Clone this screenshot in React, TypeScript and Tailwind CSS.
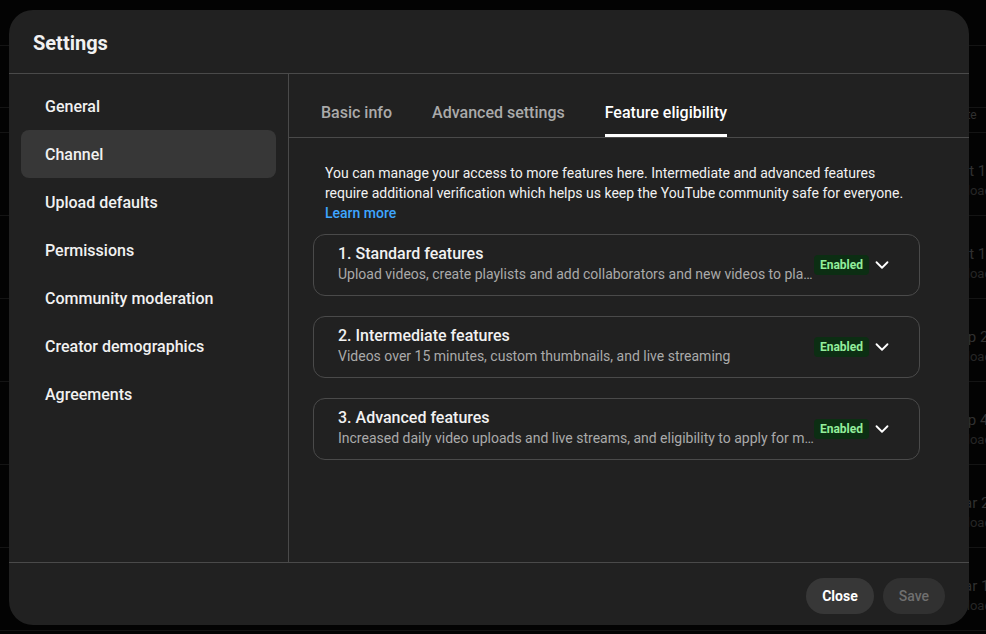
import { ChevronDown } from 'lucide-react';

const navItems = [
  'General',
  'Channel',
  'Upload defaults',
  'Permissions',
  'Community moderation',
  'Creator demographics',
  'Agreements',
];

const tabs = ['Basic info', 'Advanced settings', 'Feature eligibility'];

const features = [
  {
    title: '1. Standard features',
    desc: 'Upload videos, create playlists and add collaborators and new videos to playlists',
  },
  {
    title: '2. Intermediate features',
    desc: 'Videos over 15 minutes, custom thumbnails, and live streaming',
  },
  {
    title: '3. Advanced features',
    desc: 'Increased daily video uploads and live streams, and eligibility to apply for monetization',
  },
];

const bgRows = ['Oct 16, 2023', 'Oct 16, 2023', 'Sep 27, 2023', 'Sep 4, 2023', 'Mar 23, 2023', 'Mar 15, 2023'];

function Backdrop() {
  return (
    <div className="flex h-full flex-col bg-[#030303] text-[14px] text-[#303030]">
      <div className="h-[46px] border-b border-[#141414]" />
      <div className="h-[62px] border-b border-[#141414]" />
      <div className="flex h-[25px] items-center border-b border-[#141414] pt-[8px]">
        <div className="w-[952px] shrink-0" />
        <span className="text-[12px]">Date ⌄</span>
      </div>
      {bgRows.map((d, i) => (
        <div key={i} className="flex h-[83px] shrink-0 border-b border-[#141414]">
          <div className="w-[951px] shrink-0" />
          <div className="flex flex-col whitespace-nowrap pt-[28px] leading-5">
            <span className="text-[15px]">{d}</span>
            <span className="text-[13px] text-[#262626]">Uploaded</span>
          </div>
        </div>
      ))}
    </div>
  );
}

export default function App() {
  return (
    <div
      className="relative h-[634px] w-[986px] overflow-hidden"
      style={{ fontFamily: 'Roboto, "Noto Sans", Arial, sans-serif' }}
    >
      <Backdrop />

      <div className="absolute left-[9px] top-[10px] flex h-[615px] w-[960px] flex-col overflow-hidden rounded-[24px] bg-[#212121] text-[#f1f1f1]">
        <div className="flex h-[64px] items-center border-b border-[#4a4a4a] px-6 pt-[2px]">
          <h1 className="text-[20px] font-bold">Settings</h1>
        </div>

        <div className="flex min-h-0 flex-1">
          <nav className="flex w-[280px] flex-col border-r border-[#4a4a4a] px-3 pt-2">
            {navItems.map((item) => (
              <div
                key={item}
                className={`flex h-12 items-center rounded-lg pl-6 pt-[2px] text-[16px] font-medium ${
                  item === 'Channel' ? 'bg-[#373737]' : ''
                }`}
              >
                {item}
              </div>
            ))}
          </nav>

          <div className="flex min-w-0 flex-1 flex-col">
            <div className="flex gap-10 border-b border-[#4a4a4a] pl-8 pt-[15px]">
              {tabs.map((t) => {
                const active = t === 'Feature eligibility';
                return (
                  <div
                    key={t}
                    className={`flex h-12 items-center border-b-[3px] pt-[3px] text-[16px] font-medium ${
                      active ? 'border-white text-white' : 'border-transparent text-[#aaaaaa]'
                    }`}
                  >
                    {t}
                  </div>
                );
              })}
            </div>

            <div className="flex w-[631px] flex-col pl-6 pt-[25px]">
              <p className="px-3 text-[14px] leading-5 text-[#f1f1f1]">
                You can manage your access to more features here. Intermediate and advanced features require
                additional verification which helps us keep the YouTube community safe for everyone.{' '}
                <span className="block font-medium text-[#3ea6ff]">Learn more</span>
              </p>

              <div className="mt-[11px] flex flex-col gap-5">
                {features.map((f) => (
                  <div
                    key={f.title}
                    className="flex h-[62px] items-center rounded-xl border border-[#4a4a4a] pl-6 pr-[26px]"
                  >
                    <div className="flex min-w-0 flex-1 flex-col pb-[2px]">
                      <span className="text-[16px] font-medium leading-5">{f.title}</span>
                      <span className="truncate text-[14px] leading-5 text-[#aaaaaa]">{f.desc}</span>
                    </div>
                    <span className="flex h-5 shrink-0 items-center rounded-[4px] bg-[#0c2e13] px-[6px] text-[12px] font-bold text-[#93ee9b]">
                      Enabled
                    </span>
                    <ChevronDown className="ml-[2px] h-[22px] w-[22px] shrink-0 text-white" strokeWidth={2} />
                  </div>
                ))}
              </div>
            </div>
          </div>
        </div>

        <div className="flex h-[63px] justify-end gap-[9px] border-t border-[#4a4a4a] pr-6 pt-[15px]">
          <button className="h-9 rounded-full bg-[#373737] px-4 text-[14px] font-bold text-white">Close</button>
          <button className="h-9 rounded-full bg-[#313131] px-4 text-[14px] font-medium text-[#6f6f6f]">Save</button>
        </div>
      </div>
    </div>
  );
}
